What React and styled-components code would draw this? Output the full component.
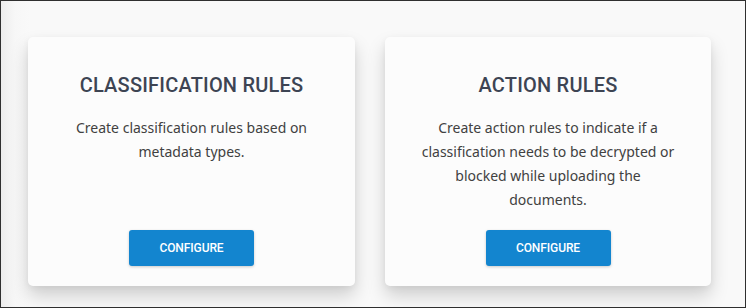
import React from 'react'
import styled, { createGlobalStyle } from 'styled-components'

const GlobalStyle = createGlobalStyle`
  html, body { margin: 0; padding: 0; }
  body { font-family: Roboto, "Liberation Sans", sans-serif; }
`

const cards = [
  {
    title: 'CLASSIFICATION RULES',
    text: 'Create classification rules based on metadata types.',
  },
  {
    title: 'ACTION RULES',
    text: 'Create action rules to indicate if a classification needs to be decrypted or blocked while uploading the documents.',
  },
]

const App = () => {
  return (
    <>
      <GlobalStyle />
      <Frame>
        <Grid>
          {cards.map((c) => (
            <Card key={c.title}>
              <Title>{c.title}</Title>
              <Text>{c.text}</Text>
              <Button>CONFIGURE</Button>
            </Card>
          ))}
        </Grid>
      </Frame>
    </>
  )
}

export default App

const Frame = styled.div`
  width: 746px;
  height: 308px;
  box-sizing: border-box;
  border: 1px solid #2f2f2f;
  background: linear-gradient(90deg, #ececec 0px, #f7f7f7 14px, #f9f9f9 30px);
  padding: 36px 0 0 27px;
  overflow: hidden;
`

const Grid = styled.div`
  display: grid;
  grid-template-columns: 327px 326px;
  column-gap: 30px;
`

const Card = styled.div`
  height: 249px;
  box-sizing: border-box;
  background: #fcfcfc;
  border-radius: 5px;
  box-shadow: 0 10px 18px rgba(0, 0, 0, 0.17), 0 2px 6px rgba(0, 0, 0, 0.05);
  padding: 36px 20px 20px;
  display: flex;
  flex-direction: column;
  align-items: center;
  text-align: center;
`

const Title = styled.h3`
  margin: 0;
  font-family: Roboto, sans-serif;
  font-weight: 500;
  font-size: 20px;
  line-height: 24px;
  color: #3d4453;
  letter-spacing: 0.2px;
`

const Text = styled.p`
  margin: 19px 0 0;
  font-family: "Noto Sans", "Open Sans", sans-serif;
  font-size: 14px;
  line-height: 24px;
  color: #414141;
  max-width: 264px;
`

const Button = styled.button`
  margin-top: auto;
  width: 125px;
  height: 36px;
  border: none;
  border-radius: 3px;
  background: #1385cf;
  color: #fff;
  font-family: Roboto, sans-serif;
  font-weight: 500;
  font-size: 12px;
  letter-spacing: -0.1px;
  box-shadow: 0 1px 3px rgba(0, 0, 0, 0.2);
  cursor: pointer;
`
